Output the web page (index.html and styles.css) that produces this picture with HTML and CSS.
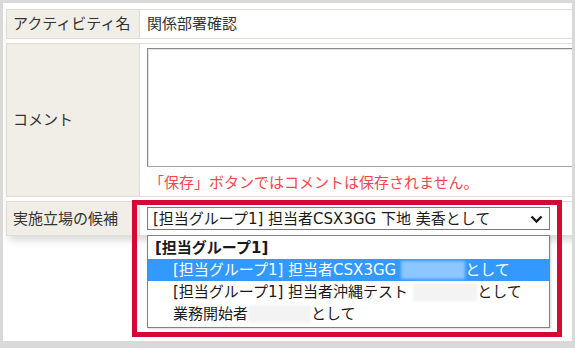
FILE: index.html
```html
<!DOCTYPE html>
<html lang="ja">
<head>
<meta charset="utf-8">
<link rel="stylesheet" href="styles.css">
</head>
<body>
<div class="panel">
  <div class="form">
    <div class="label">アクティビティ名</div>
    <div class="value">関係部署確認</div>

    <div class="label">コメント</div>
    <div class="value value-col">
      <div class="textarea"></div>
      <div class="note">「保存」ボタンではコメントは保存されません。</div>
    </div>

    <div class="label">実施立場の候補</div>
    <div class="value">
      <div class="select">
        <span class="select-text">[担当グループ1] 担当者CSX3GG 下地 美香として</span>
        <svg class="chevron" width="13" height="9" viewBox="0 0 13 9"><polyline points="1.5,1.5 6.5,6.5 11.5,1.5" fill="none" stroke="#1a1a1a" stroke-width="2.4"/></svg>
      </div>
    </div>
  </div>

  <div class="highlight-box"></div>

  <div class="list">
    <div class="opt group">[担当グループ1]</div>
    <div class="opt sub selected">[担当グループ1] 担当者CSX3GG <span class="blur blur-blue"></span>として</div>
    <div class="opt sub">[担当グループ1] 担当者沖縄テスト <span class="blur blur-white w2"></span>として</div>
    <div class="opt sub">業務開始者<span class="blur blur-white w3"></span>として</div>
  </div>
</div>
</body>
</html>
```

FILE: styles.css
```css
* { box-sizing: border-box; }
html, body { margin: 0; padding: 0; }
body {
  background: #d9d9d9;
  width: 575px;
  height: 348px;
  overflow: hidden;
  font-family: "DejaVu Sans", "Noto Sans CJK JP", sans-serif;
  font-size: 15px;
  color: #333;
}
.panel {
  position: relative;
  margin: 3px 0 0 3px;
  width: 569px;
  height: 338px;
  background: #fff;
  overflow: hidden;
  padding: 6px 0 0 3px;
}
.form {
  display: grid;
  grid-template-columns: 134px 500px;
  grid-template-rows: 30px 154px 35px;
  row-gap: 4px;
  width: 634px;
  background: #fff;
  box-shadow: 0 7px 8px -3px rgba(0,0,0,0.16);
}
.label {
  background: #f1eee7;
  border: 1px solid #e0ddd5;
  display: flex;
  align-items: center;
  padding-left: 6px;
  color: #333;
  line-height: 20px;
  white-space: nowrap;
}
.value {
  border: 1px solid #e0ddd5;
  border-left: none;
  display: flex;
  align-items: center;
  padding-left: 7px;
  line-height: 20px;
  white-space: nowrap;
}
.value-col {
  flex-direction: column;
  align-items: flex-start;
  padding-top: 4px;
}
.textarea {
  width: 480px;
  height: 119px;
  border: 1px solid #a3a3a3;
  border-top-color: #8a8a8a;
  border-left-color: #8a8a8a;
  box-shadow: inset 1px 1px 0 #e4e4e4;
  background: #fff;
}
.note {
  margin-top: 6px;
  margin-left: 2px;
  color: #f5474d;
  line-height: 20px;
}
.select {
  width: 403px;
  height: 23px;
  border: 1px solid #7a7a7a;
  background: #fff;
  display: flex;
  align-items: center;
  padding-left: 5px;
  color: #1a1a1a;
  position: relative;
}
.select-text { line-height: 20px; }
.chevron {
  position: absolute;
  right: 6px;
  top: 7px;
}
.highlight-box {
  position: absolute;
  left: 129px;
  top: 197px;
  width: 430px;
  height: 137px;
  border: 5px solid #d20a35;
}
.list {
  position: absolute;
  left: 144px;
  top: 232px;
  width: 403px;
  height: 93px;
  border: 1px solid #828282;
  background: #fff;
  padding-top: 1px;
  box-shadow: 1px 1px 2px rgba(0,0,0,0.15);
}
.opt {
  height: 22px;
  line-height: 22px;
  white-space: nowrap;
  color: #1a1a1a;
  display: flex;
  align-items: center;
}
.group { font-weight: bold; padding-left: 7px; }
.sub { padding-left: 25px; }
.selected { background: #3399ff; color: #fff; }
.blur {
  display: inline-block;
  width: 64px;
  height: 18px;
  filter: blur(1.5px);
}
.blur-blue { background: #8ec6ff; margin-left: 5px; }
.blur-white { background: #f3f3f3; margin-left: 5px; }
.w3 { margin-left: 0; width: 63px; }
```
